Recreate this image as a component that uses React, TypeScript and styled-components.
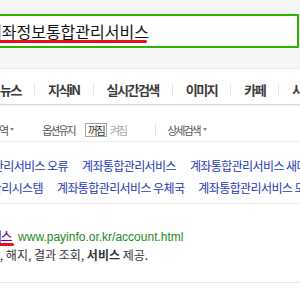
import React from 'react';
import styled, { createGlobalStyle } from 'styled-components';

const GlobalStyle = createGlobalStyle`
    html, body {
        margin: 0;
        padding: 0;
        background: #fff;
        font-family: "Noto Sans CJK KR", "Noto Sans", sans-serif;
        overflow: hidden;
    }
`;

const Page = styled.div`
    width: 300px;
    height: 300px;
    overflow: hidden;
    background: #fff;
`;

const Header = styled.div`
    background: #f6f6f6;
    padding: 14px 0 20px 0;
`;

const SearchBox = styled.div`
    position: relative;
    box-sizing: border-box;
    margin-left: -10px;
    width: 309px;
    height: 34px;
    border: 2px solid #2db400;
    background: #fff;
    display: flex;
    align-items: center;
`;

const Query = styled.div`
    margin-left: -5px;
    font-size: 16px;
    color: #111;
    white-space: nowrap;
    line-height: 20px;
`;

const RedMark = styled.div<{ $width: number }>`
    position: absolute;
    height: 3px;
    width: ${p => p.$width}px;
    border-radius: 0 2px 2px 0;
    background: #e3121b;
`;

const SearchMark = styled(RedMark)`
    left: 8px;
    top: 24px;
`;

const TabBar = styled.div`
    height: 37px;
    background: #fff;
    border-top: 1px solid #ececec;
    border-bottom: 1px solid #d6d6d6;
    box-shadow: 0 1px 1px rgba(0, 0, 0, 0.06);
    display: flex;
    align-items: center;
    gap: 13px;
    padding-top: 5px;
    box-sizing: border-box;
    white-space: nowrap;
`;

const Tab = styled.span`
    font-size: 13px;
    font-weight: 700;
    letter-spacing: -1.5px;
    color: #3a3a3a;
`;

const TabDivider = styled.span`
    display: inline-block;
    width: 1px;
    height: 11px;
    background: #e3e3e3;
    flex: none;
`;

const OptionBar = styled.div`
    height: 37px;
    padding-top: 13px;
    box-sizing: border-box;
    display: flex;
    align-items: center;
    border-bottom: 1px solid #eeeeee;
    white-space: nowrap;
    font-size: 11px;
    letter-spacing: -2px;
    color: #555;
`;

const OptionItem = styled.span<{ $gap?: number; $indent?: number }>`
    display: inline-flex;
    align-items: center;
    margin-left: ${p => p.$indent ?? 0}px;
    margin-right: ${p => p.$gap ?? 0}px;
`;

const Caret = styled.span`
    display: inline-block;
    width: 0;
    height: 0;
    margin-left: 3px;
    border-left: 2.5px solid transparent;
    border-right: 2.5px solid transparent;
    border-top: 3px solid #888;
`;

const Toggle = styled.span<{ $on?: boolean }>`
    display: inline-flex;
    align-items: center;
    justify-content: center;
    box-sizing: border-box;
    height: 14px;
    padding: 0 2px;
    border: 1px solid ${p => (p.$on ? '#a5a5a5' : 'transparent')};
    color: ${p => (p.$on ? '#333' : '#aaa')};
    background: #fff;
`;

const OptionDivider = styled.span`
    display: inline-block;
    width: 1px;
    height: 11px;
    background: #e2e2e2;
    margin: 0 11px 0 26px;
`;

const Related = styled.div`
    padding: 13px 0 0 0;
    height: 62px;
    box-sizing: border-box;
    border-bottom: 1px solid #e8e8e8;
`;

const RelatedRow = styled.div<{ $shift: number }>`
    display: flex;
    gap: 14px;
    margin-left: -${p => p.$shift}px;
    white-space: nowrap;
    height: 21.5px;
    align-items: center;
`;

const RelatedLink = styled.a`
    font-size: 12px;
    letter-spacing: -0.6px;
    color: #2239b5;
    text-decoration: none;
`;

const Result = styled.div`
    padding-top: 22px;
    height: 79px;
    box-sizing: border-box;
    border-bottom: 1px solid #e6e6e6;
`;

const TitleRow = styled.div`
    position: relative;
    display: flex;
    align-items: baseline;
    gap: 7px;
    white-space: nowrap;
    height: 19px;
`;

const Title = styled.a`
    margin-left: -104px;
    font-size: 13px;
    letter-spacing: -1.5px;
    color: #660099;
    text-decoration: underline;
    text-underline-offset: 2px;
`;

const TitleMark = styled(RedMark)`
    left: 0;
    top: 17px;
`;

const Url = styled.span`
    font-family: "Liberation Sans", Arial, sans-serif;
    font-size: 12px;
    color: #1d8a1d;
`;

const Description = styled.div`
    margin-top: 1px;
    margin-left: -47px;
    font-size: 12px;
    letter-spacing: 0;
    color: #333;
    white-space: nowrap;
    b {
        font-weight: 700;
    }
`;

const tabs = ['뉴스', '지식iN', '실시간검색', '이미지', '카페', '사전'];

const relatedRows = [
    { shift: 49, items: ['계좌통합관리서비스 오류', '계좌통합관리서비스', '계좌통합관리서비스 새마을금고'] },
    { shift: 51, items: ['계좌통합관리시스템', '계좌통합관리서비스 우체국', '계좌통합관리서비스 모바일'] },
];

export default function App() {
    return (
        <Page>
            <GlobalStyle />
            <Header>
                <SearchBox>
                    <Query>계좌정보통합관리서비스</Query>
                    <SearchMark $width={147} />
                </SearchBox>
            </Header>

            <TabBar>
                {tabs.map((tab, i) => (
                    <React.Fragment key={tab}>
                        {i > 0 && <TabDivider />}
                        <Tab>{tab}</Tab>
                    </React.Fragment>
                ))}
            </TabBar>

            <OptionBar>
                <OptionItem $indent={-9} $gap={28}>
                    영역<Caret />
                </OptionItem>
                <OptionItem $gap={10}>옵션유지</OptionItem>
                <Toggle $on>꺼짐</Toggle>
                <Toggle>켜짐</Toggle>
                <OptionDivider />
                <OptionItem>
                    상세검색<Caret />
                </OptionItem>
            </OptionBar>

            <Related>
                {relatedRows.map(row => (
                    <RelatedRow key={row.items[0]} $shift={row.shift}>
                        {row.items.map(item => (
                            <RelatedLink key={item} href="#">
                                {item}
                            </RelatedLink>
                        ))}
                    </RelatedRow>
                ))}
            </Related>

            <Result>
                <TitleRow>
                    <Title href="#">계좌정보통합관리서비스</Title>
                    <Url>www.payinfo.or.kr/account.html</Url>
                    <TitleMark $width={14} />
                </TitleRow>
                <Description>
                    계좌 조회, 해지, 결과 조회, <b>서비스</b> 제공.
                </Description>
            </Result>
        </Page>
    );
}
